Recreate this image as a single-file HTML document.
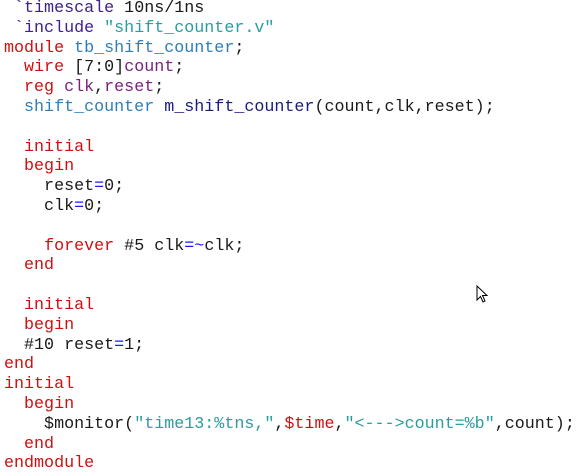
<!DOCTYPE html>
<html><head><meta charset="utf-8"><style>
html,body{margin:0;padding:0;background:#fff;width:577px;height:476px;overflow:hidden}
pre{margin:0;padding:0 0 0 4px;font-family:"Liberation Mono","Courier New",monospace;font-size:16.7px;line-height:19.8px;color:#1a1a1a;position:relative;top:-1px;letter-spacing:0}
.k{color:#cc1111}.d{color:#40208a}.s{color:#2a9d9d}.t{color:#2c7fb8}.v{color:#7a2080}.n{color:#1a1a80}.o{color:#1a1aff}
</style></head><body>
<pre> <span class="d">`timescale</span> 10ns/1ns
 <span class="d">`include</span> <span class="s">"shift_counter.v"</span>
<span class="k">module</span> <span class="t">tb_shift_counter</span>;
  <span class="k">wire</span> [7:0]<span class="v">count</span>;
  <span class="k">reg</span> <span class="v">clk</span>,<span class="v">reset</span>;
  <span class="t">shift_counter</span> <span class="n">m_shift_counter</span>(count,clk,reset);

  <span class="k">initial</span>
  <span class="k">begin</span>
    reset<span class="o">=</span>0;
    clk<span class="o">=</span>0;

    <span class="k">forever</span> #5 clk<span class="o">=~</span>clk;
  <span class="k">end</span>

  <span class="k">initial</span>
  <span class="k">begin</span>
  #10 reset<span class="o">=</span>1;
<span class="k">end</span>
<span class="k">initial</span>
  <span class="k">begin</span>
    $monitor(<span class="s">"time13:%tns,"</span>,<span class="k">$time</span>,<span class="s">"&lt;---&gt;count=%b"</span>,count);
  <span class="k">end</span>
<span class="k">endmodule</span></pre>
<svg style="position:absolute;left:476px;top:285px" width="14" height="20" viewBox="0 0 14 20"><path d="M1 1 L1 15 L4.5 11.5 L7 17 L9 16 L6.5 10.5 L11 10.5 Z" fill="#fff" stroke="#000" stroke-width="1"/></svg>
</body></html>
